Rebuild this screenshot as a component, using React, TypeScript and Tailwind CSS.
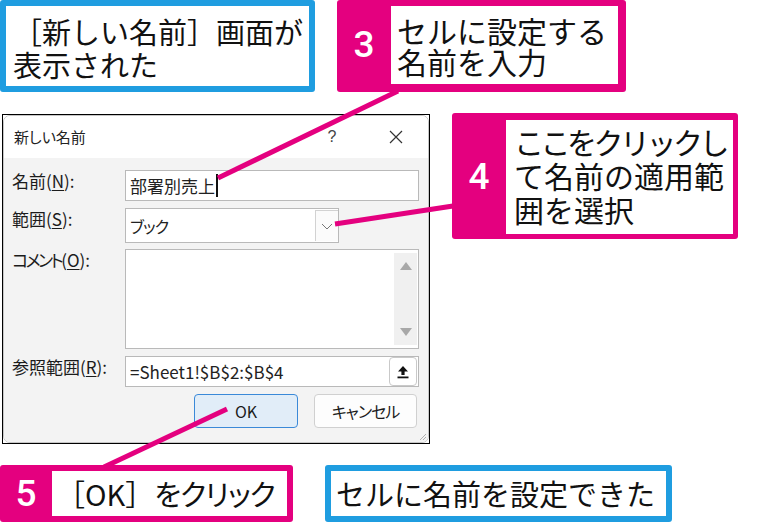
import React from 'react';

const StepBox: React.FC<{ num: string; className: string; children: React.ReactNode; innerClass: string; numClass?: string }> = ({
  num,
  className,
  children,
  innerClass,
  numClass = '',
}) => (
  <div className={`flex rounded-[3px] bg-[#e4007f] ${className}`}>
    <div
      className={`flex shrink-0 items-center justify-center font-['Roboto',sans-serif] font-medium text-[37px] text-white ${numClass}`}
    >
      {num}
    </div>
    <div className={`flex-1 bg-white ${innerClass}`}>{children}</div>
  </div>
);

const Label: React.FC<{ text: string; k: string; tight?: boolean }> = ({ text, k, tight }) => (
  <div className="w-[113px] shrink-0 whitespace-nowrap text-[17px] leading-[22px] text-[#1b1b1b] [font-feature-settings:'palt']">
    <span className={tight ? 'tracking-[-2.5px]' : ''}>{text}</span>(<span className="underline underline-offset-2">{k}</span>):
  </div>
);

function Dialog() {
  return (
    <div className="ml-[2px] mt-[1px] h-[330px] w-[428px] shrink-0 border border-black bg-white">
      <div className="relative flex h-full flex-col overflow-hidden rounded-[7px] border border-[#c6c6c6]">
        {/* title bar */}
        <div className="flex h-[42px] shrink-0 items-center bg-white pl-[10px] pr-[22px]">
          <span className="text-[15px] text-[#222] [font-feature-settings:'palt']">新しい名前</span>
          <span className="ml-auto flex w-[20px] justify-center font-['Liberation_Sans',sans-serif] text-[16px] text-[#444]">?</span>
          <span className="ml-[44px] flex w-[20px] justify-center">
            <svg width="14" height="14" viewBox="0 0 14 14">
              <path d="M1 1L13 13M13 1L1 13" stroke="#333" strokeWidth="1.2" fill="none" />
            </svg>
          </span>
        </div>

        {/* body */}
        <div className="flex flex-1 flex-col bg-[#f3f3f3] pl-[8px] pt-[12px]">
          <div className="mb-[7px] flex h-[31px] items-start">
            <Label text="名前" k="N" />
            <div className="flex h-[31px] w-[294px] items-center border border-[#b9b9b9] bg-white pl-[4px] text-[17px] text-[#222]">
              部署別売上
              <span className="ml-[1px] h-[23px] w-[1.5px] bg-[#111]" />
            </div>
          </div>

          <div className="mb-[6px] flex h-[35px] items-start">
            <Label text="範囲" k="S" />
            <div className="flex h-[35px] w-[214px] items-stretch border border-[#b9b9b9] bg-white">
              <div className="flex flex-1 items-center pl-[4px] text-[16px] tracking-[-1px] text-[#222] [font-feature-settings:'palt']">ブック</div>
              <div className="my-[1px] flex w-[23px] items-center justify-center border-l border-t border-[#d2d2d2] bg-[#fbfbfb]">
                <svg width="12" height="7" viewBox="0 0 12 7">
                  <path d="M1 1L6 6L11 1" stroke="#777" strokeWidth="1" fill="none" />
                </svg>
              </div>
            </div>
          </div>

          <div className="mb-[7px] flex h-[100px] items-start">
            <Label text="コメント" k="O" tight />
            <div className="flex h-[100px] w-[294px] justify-end border border-[#b9b9b9] bg-white py-[3px] pr-[1px]">
              <div className="flex w-[23px] flex-col items-center justify-between bg-[#f0f0f0] py-[9px]">
                <svg width="12" height="8" viewBox="0 0 12 8">
                  <path d="M6 0L12 8H0Z" fill="#a8a8a8" />
                </svg>
                <svg width="12" height="8" viewBox="0 0 12 8">
                  <path d="M0 0H12L6 8Z" fill="#a8a8a8" />
                </svg>
              </div>
            </div>
          </div>

          <div className="mb-[7px] flex h-[31px] items-start">
            <Label text="参照範囲" k="R" />
            <div className="flex h-[31px] w-[294px] items-center border border-[#b9b9b9] bg-white pl-[4px] pr-[1px] text-[17px] text-[#222]">
              <span className="flex-1">=Sheet1!$B$2:$B$4</span>
              <div className="flex h-[29px] w-[28px] items-center justify-center rounded-[4px] border border-[#c9c9c9] bg-white">
                <svg width="12" height="14" viewBox="0 0 12 14">
                  <path d="M6 1L11 6.5H7.6V10H4.4V6.5H1Z" fill="#111" />
                  <rect x="0.5" y="11.5" width="11" height="1.8" fill="#111" />
                </svg>
              </div>
            </div>
          </div>

          <div className="flex h-[34px] justify-end gap-[16px] pr-[11px]">
            <button className="h-[34px] w-[104px] rounded-[4px] border border-[#3a89d8] bg-[#e1edf8] text-[16px] text-[#1b1b1b]">
              OK
            </button>
            <button className="h-[34px] w-[103px] rounded-[4px] border border-[#d0d0d0] bg-[#fdfdfd] text-[16px] tracking-[-1px] text-[#1b1b1b] [font-feature-settings:'palt']">
              キャンセル
            </button>
          </div>
        </div>

        {/* resize grip */}
        <svg className="absolute bottom-[1px] right-[1px]" width="9" height="9" viewBox="0 0 9 9">
          <path d="M8 2L2 8M8 5L5 8" stroke="#b0b0b0" strokeWidth="1" />
        </svg>
      </div>
    </div>
  );
}

export default function App() {
  return (
    <div className="relative flex h-[523px] w-[783px] flex-col overflow-hidden bg-white font-['Noto_Sans_CJK_JP',sans-serif] text-[#111]">
      {/* top row */}
      <div className="flex h-[92px] shrink-0">
        <div className="h-[92px] w-[315px] shrink-0 whitespace-nowrap rounded-[3px] border-[6px] border-[#1f9de0] pl-[7px] pt-[9px] text-[29px] leading-[33px]">
          <p>［新しい名前］画面が</p>
          <p>表示された</p>
        </div>
        <StepBox
          num="3"
          className="ml-[22px] h-[92px] w-[289px] pb-[8px] pr-[8px] pt-[6px]"
          numClass="w-[54px]"
          innerClass="whitespace-nowrap pl-[6px] pt-[9px] text-[30px] leading-[31px]"
        >
          <p>セルに設定する</p>
          <p>名前を入力</p>
        </StepBox>
      </div>

      {/* middle row */}
      <div className="mt-[21px] flex shrink-0 items-start">
        <Dialog />
        <StepBox
          num="4"
          className="ml-[22px] h-[126px] w-[286px] pb-[5px] pr-[5px] pt-[7px]"
          numClass="w-[54px]"
          innerClass="whitespace-nowrap pl-[8px] pt-[4px] text-[30px] leading-[34px]"
        >
          <p className="tracking-[-3.5px]">ここをクリックし</p>
          <p>て名前の適用範</p>
          <p>囲を選択</p>
        </StepBox>
      </div>

      {/* bottom row */}
      <div className="mt-[21px] flex shrink-0">
        <StepBox
          num="5"
          className="h-[57px] w-[293px] pb-[6px] pr-[6px] pt-[6px]"
          numClass="w-[52px]"
          innerClass="flex items-center whitespace-nowrap pl-[4px] text-[29px] leading-[33px]"
        >
          <span>［OK］</span>
          <span className="tracking-[-1px] [font-feature-settings:'palt']">をクリック</span>
        </StepBox>
        <div className="ml-[32px] flex h-[57px] w-[347px] items-center whitespace-nowrap rounded-[3px] border-[6px] border-[#1f9de0] pl-[5px] text-[29px] leading-[33px]">
          セルに名前を設定できた
        </div>
      </div>

      {/* leader lines */}
      <svg className="pointer-events-none absolute inset-0" width="783" height="523" viewBox="0 0 783 523">
        <line x1="218" y1="178" x2="398" y2="91" stroke="#e4007f" strokeWidth="5" />
        <line x1="335" y1="224" x2="453" y2="206" stroke="#e4007f" strokeWidth="5" />
        <line x1="227" y1="409" x2="104" y2="467" stroke="#e4007f" strokeWidth="5" />
      </svg>
    </div>
  );
}
